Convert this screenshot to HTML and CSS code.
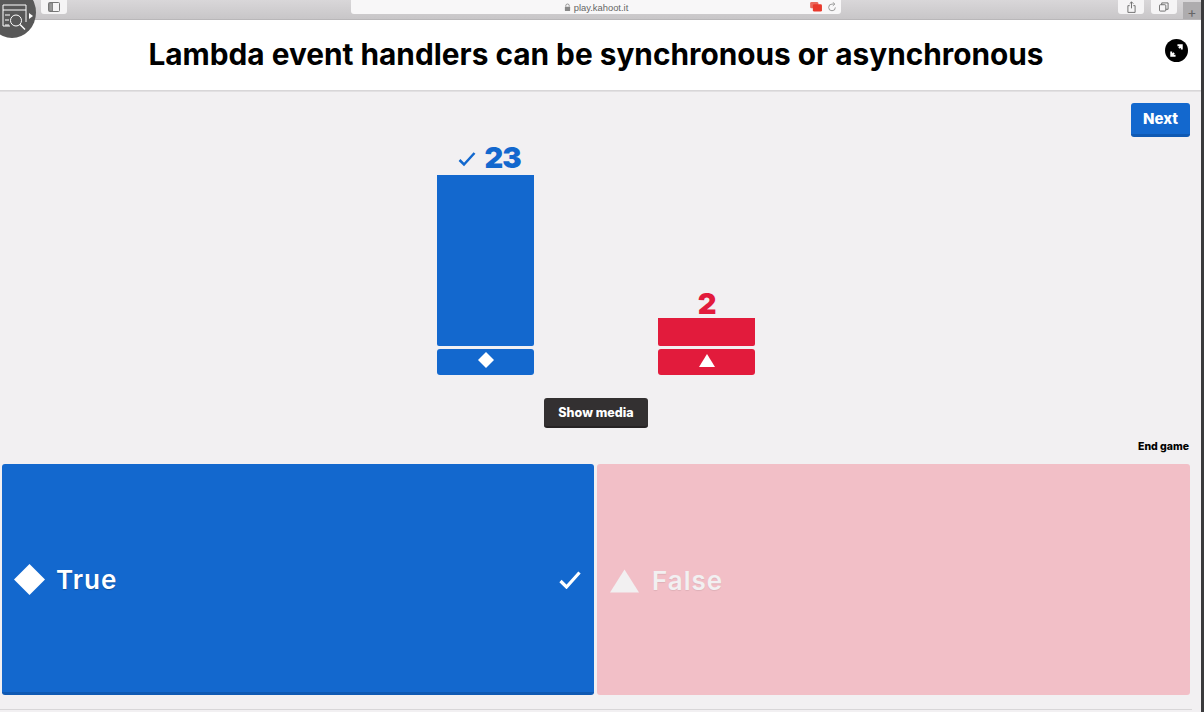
FILE: index.html
```html
<!DOCTYPE html>
<html lang="en">

<head>
    <meta charset="UTF-8">
    <title>play.kahoot.it</title>
    <link rel="stylesheet" href="styles.css">
</head>

<body>
    <div class="recorder">
        <svg class="recorder-icon" viewBox="0 0 28 28" width="28" height="28">
            <path d="M9 23H2V2h23v17M2 7h23M4 12h5M4 17h4M4 22h4" fill="none" stroke="#fff" stroke-width="1" />
            <circle cx="15" cy="17.500" r="5.500" fill="none" stroke="#fff" stroke-width="1" />
            <path d="M19 21.500l5 5" fill="none" stroke="#fff" stroke-width="1.400" />
        </svg>
        <span class="recorder-arrow"></span>
    </div>

    <div class="browser-bar">
        <div class="bar-left">
            <span class="bar-btn">
                <svg viewBox="0 0 12 10" width="12" height="10">
                    <rect x="0.5" y="0.5" width="11" height="9" rx="1" fill="none" stroke="#777" />
                    <path d="M4.5 0.5v9M1 1h3.5v8H1z" fill="#999" stroke="#777" stroke-width="0.6" />
                </svg>
            </span>
        </div>
        <div class="address">
            <svg viewBox="0 0 8 10" width="7" height="9">
                <path d="M2 4V3a2 2 0 0 1 4 0v1" fill="none" stroke="#888" />
                <rect x="1" y="4" width="6" height="5" rx="1" fill="#888" />
            </svg>
            <span>play.kahoot.it</span>
            <div class="address-tools">
                <svg viewBox="0 0 14 11" width="13" height="10">
                    <rect x="0" y="0" width="9" height="7" rx="1.5" fill="#e9695c" />
                    <rect x="3" y="2.5" width="10" height="8" rx="1.5" fill="#e8392c" />
                </svg>
                <svg viewBox="0 0 12 12" width="10" height="10">
                    <path d="M10 6.500A4 4 0 1 1 6 2.500h2" fill="none" stroke="#888" />
                    <path d="M7 0.500l2.500 2L7 4.500" fill="none" stroke="#888" />
                </svg>
            </div>
        </div>
        <div class="bar-right">
            <span class="bar-btn small">
                <svg viewBox="0 0 10 13" width="9" height="12">
                    <path d="M3 5H1v7.500h8V5H7M5 8V1M3 2.800L5 .8l2 2" fill="none" stroke="#666" />
                </svg>
            </span>
            <span class="bar-btn small">
                <svg viewBox="0 0 11 11" width="10" height="10">
                    <rect x="0.5" y="3" width="7" height="7" rx="1" fill="none" stroke="#666" />
                    <path d="M3 3V1h7v7H7.500" fill="none" stroke="#666" />
                </svg>
            </span>
            <span class="new-tab">+</span>
        </div>
    </div>

    <div class="page">
        <div class="app">
            <header class="question">
                <h1>Lambda event handlers can be synchronous or asynchronous</h1>
                <span class="fullscreen">
                    <svg viewBox="0 0 24 24" width="23" height="23">
                        <circle cx="12" cy="12" r="12" fill="#000" />
                        <path d="M13 6.500h4.500V11M17 7l-2.500 2.500M11 17.500H6.500V13M7 17l2.500-2.500" fill="none" stroke="#fff" stroke-width="2" />
                    </svg>
                </span>
            </header>

            <main class="results">
                <div class="next-row">
                    <button class="btn next">Next</button>
                </div>

                <div class="chart">
                    <div class="column">
                        <div class="count blue-text with-check">
                            <svg class="count-check" viewBox="0 0 18 16" width="18" height="16">
                                <path d="M1.500 9l4.500 4.500L16.500 2" fill="none" stroke="#1368ce" stroke-width="2.500" />
                            </svg>
                            <span>23</span>
                        </div>
                        <div class="bar blue tall"></div>
                        <div class="bar-foot blue">
                            <svg viewBox="0 0 18 18" width="18" height="18">
                                <path d="M9 1l8 8-8 8-8-8z" fill="#fff" />
                            </svg>
                        </div>
                    </div>
                    <div class="column">
                        <div class="count red-text"><span>2</span></div>
                        <div class="bar red short"></div>
                        <div class="bar-foot red">
                            <svg viewBox="0 0 16 13" width="16" height="13">
                                <path d="M8 0l8 13H0z" fill="#fff" />
                            </svg>
                        </div>
                    </div>
                </div>

                <div class="media-row">
                    <button class="btn media">Show media</button>
                </div>

                <div class="end-row">
                    <span class="end-game">End game</span>
                </div>

                <div class="answers">
                    <div class="answer correct">
                        <svg class="shape" viewBox="0 0 32 32" width="31" height="31">
                            <path d="M16 0l16 16-16 16L0 16z" fill="#fff" />
                        </svg>
                        <span class="answer-text">True</span>
                        <svg class="answer-check" viewBox="0 0 22 18" width="22" height="18">
                            <path d="M1.500 10l6 6L20.500 1.500" fill="none" stroke="#fff" stroke-width="3.200" />
                        </svg>
                    </div>
                    <div class="answer wrong">
                        <svg class="shape" viewBox="0 0 30 24" width="29" height="24">
                            <path d="M15 0l15 24H0z" fill="#f2f0f1" />
                        </svg>
                        <span class="answer-text">False</span>
                    </div>
                </div>
            </main>
        </div>
    </div>
</body>

</html>
```

FILE: styles.css
```css
* {
    box-sizing: border-box;
    margin: 0;
    padding: 0;
}

html,
body {
    width: 1204px;
    height: 712px;
    overflow: hidden;
}

body {
    display: flex;
    flex-direction: column;
    position: relative;
    font-family: Inter, "Liberation Sans", sans-serif;
    background-color: #f2f0f2;
    border-right: 3px solid #3a3a3c;
}

/* screen recorder badge */
.recorder {
    position: absolute;
    left: -12px;
    top: -13px;
    width: 48px;
    height: 51px;
    border-radius: 50%;
    background-color: #585858;
    z-index: 2;
}

.recorder-icon {
    position: absolute;
    left: 13px;
    top: 16px;
}

.recorder-arrow {
    position: absolute;
    right: 3px;
    top: 26px;
    border-left: 4px solid #fff;
    border-top: 3px solid transparent;
    border-bottom: 3px solid transparent;
}

/* safari toolbar */
.browser-bar {
    flex: 0 0 20px;
    display: flex;
    background: linear-gradient(#d9d7d9, #c8c6c8);
    border-bottom: 1px solid #b9b7b9;
}

.bar-left {
    width: 351px;
    padding-left: 41px;
}

.bar-btn {
    display: flex;
    align-items: center;
    justify-content: center;
    width: 26px;
    height: 14px;
    background-color: #f5f4f5;
    border-radius: 0 0 3px 3px;
}

.address {
    width: 490px;
    height: 14px;
    display: flex;
    align-items: center;
    justify-content: center;
    gap: 3px;
    position: relative;
    background-color: #f8f7f8;
    border-radius: 0 0 3px 3px;
    font-family: "Liberation Sans", sans-serif;
    font-size: 9.400px;
    color: #666;
}

.address-tools {
    position: absolute;
    right: 4px;
    top: 2px;
    display: flex;
    align-items: center;
    gap: 4px;
}

.bar-right {
    margin-left: auto;
    display: flex;
    gap: 7px;
}

.new-tab {
    width: 18px;
    height: 17px;
    margin: 2px 0 0 -1px;
    background-color: #aeacae;
    color: #666;
    font-size: 14px;
    line-height: 19px;
    text-align: center;
}

/* kahoot app */
.page {
    flex: 1;
    min-height: 0;
}

.app {
    width: 1192px;
    height: 100%;
}

.question {
    height: 70px;
    width: 1201px;
    display: flex;
    align-items: center;
    justify-content: center;
    position: relative;
    padding: 0 9px 3px 0;
    background-color: #fff;
    box-shadow: 0 1px 0 #d8d6d8, 0 2px 0 #e2e0e2;
}

.question h1 {
    font-size: 29.800px;
    font-weight: 700;
    color: #000;
    white-space: nowrap;
}

.fullscreen {
    position: absolute;
    left: 1165px;
    top: 19px;
    width: 23px;
    height: 23px;
}

.results {
    display: flex;
    flex-direction: column;
    height: 620px;
    border-bottom: 1px solid #d8d6d8;
}

.btn {
    border: 0;
    border-radius: 3px;
    color: #fff;
    font-family: inherit;
    font-weight: 800;
}

.next-row {
    display: flex;
    justify-content: flex-end;
    padding: 13px 2px 0 0;
}

.next {
    width: 59px;
    height: 34px;
    font-size: 15px;
    background-color: #1368ce;
    border-bottom: 3px solid #0f59b3;
}

.chart {
    display: flex;
    justify-content: center;
    align-items: flex-end;
    gap: 124px;
    height: 238px;
}

.column {
    width: 97px;
    display: flex;
    flex-direction: column;
    align-items: center;
}

.count {
    display: flex;
    align-items: center;
    justify-content: center;
    gap: 8px;
    padding-bottom: 3px;
    font-size: 29px;
    line-height: 23px;
    font-weight: 900;
    letter-spacing: -1px;
}

.with-check {
    padding: 0 0 6px 8px;
}

.count-check {
    margin-top: 2px;
}

.blue-text {
    color: #1368ce;
}

.red-text {
    color: #e21b3c;
}

.blue {
    background-color: #1368ce;
}

.red {
    background-color: #e21b3c;
}

.bar {
    width: 100%;
    border-radius: 0 0 2px 2px;
}

.tall {
    height: 171px;
}

.short {
    height: 28px;
}

.bar-foot {
    width: 100%;
    height: 26px;
    margin-top: 3px;
    padding-bottom: 3px;
    display: flex;
    align-items: center;
    justify-content: center;
    border-radius: 3px;
}

.bar-foot.blue {
    padding-bottom: 5px;
}

.media-row {
    display: flex;
    justify-content: center;
    padding-top: 23px;
}

.media {
    width: 104px;
    height: 30px;
    font-size: 12.500px;
    background-color: #333031;
    border-bottom: 2px solid #262324;
}

.end-row {
    display: flex;
    justify-content: flex-end;
    padding: 12px 3px 0 0;
    height: 36px;
}

.end-game {
    font-size: 10.500px;
    font-weight: 800;
    line-height: 14px;
    color: #000;
}

.answers {
    display: flex;
    gap: 3px;
    padding: 0 2px;
    height: 231px;
}

.answer {
    flex: 1;
    display: flex;
    align-items: center;
    padding-left: 12px;
    border-radius: 3px;
    color: #fff;
}

.correct {
    padding-top: 3px;
    background-color: #1368ce;
    border-bottom: 3px solid #0f59b3;
}

.wrong {
    padding-top: 2px;
    padding-left: 13px;
    background-color: #f2bfc7;
    color: #f2f0f1;
}

.answer-text {
    margin-left: 11px;
    font-size: 26px;
    font-weight: 600;
    letter-spacing: 1px;
    text-shadow: 0 1px 1px rgba(0, 0, 0, 0.25);
}

.wrong .answer-text {
    margin-left: 13px;
    text-shadow: 0 1px 1px rgba(0, 0, 0, 0.08);
}

.answer-check {
    margin-left: auto;
    margin-right: 13px;
}
```
